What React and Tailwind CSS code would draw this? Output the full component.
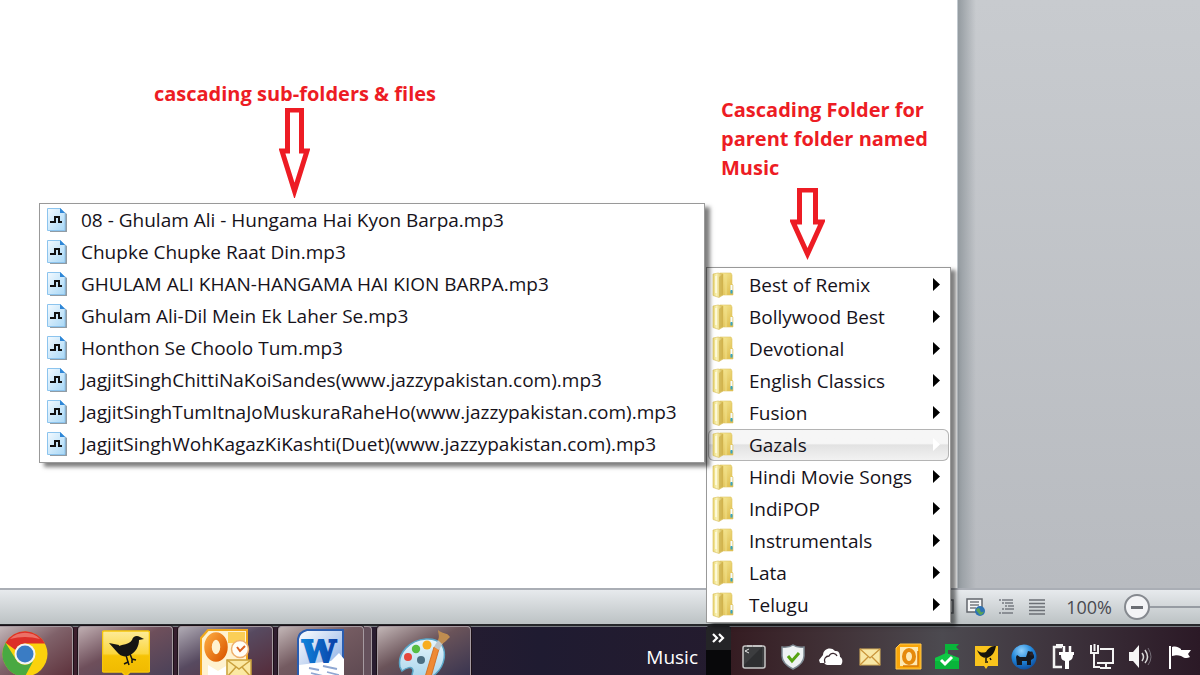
import React from "react";

const files = [
  "08 - Ghulam Ali - Hungama Hai Kyon Barpa.mp3",
  "Chupke Chupke Raat Din.mp3",
  "GHULAM ALI KHAN-HANGAMA HAI KION BARPA.mp3",
  "Ghulam Ali-Dil Mein Ek Laher Se.mp3",
  "Honthon Se Choolo Tum.mp3",
  "JagjitSinghChittiNaKoiSandes(www.jazzypakistan.com).mp3",
  "JagjitSinghTumItnaJoMuskuraRaheHo(www.jazzypakistan.com).mp3",
  "JagjitSinghWohKagazKiKashti(Duet)(www.jazzypakistan.com).mp3",
];

const folders = [
  "Best of Remix",
  "Bollywood Best",
  "Devotional",
  "English Classics",
  "Fusion",
  "Gazals",
  "Hindi Movie Songs",
  "IndiPOP",
  "Instrumentals",
  "Lata",
  "Telugu",
];

function Defs() {
  return (
    <svg width="0" height="0" className="absolute" aria-hidden="true">
      <defs>
        <linearGradient id="fileFill" x1="0" y1="0" x2="1" y2="1">
          <stop offset="0" stopColor="#f3faff" />
          <stop offset="1" stopColor="#a9d8f6" />
        </linearGradient>
        <linearGradient id="folderFront" x1="0" y1="0" x2="1" y2="0">
          <stop offset="0" stopColor="#e8d570" />
          <stop offset="0.35" stopColor="#faf3b8" />
          <stop offset="1" stopColor="#d3b54c" />
        </linearGradient>
        <linearGradient id="folderBack" x1="0" y1="0" x2="1" y2="1">
          <stop offset="0" stopColor="#f8ec9c" />
          <stop offset="1" stopColor="#dcb845" />
        </linearGradient>
        <linearGradient id="yellow" x1="0" y1="0" x2="0" y2="1">
          <stop offset="0" stopColor="#fdeb9a" />
          <stop offset="0.5" stopColor="#fbd63e" />
          <stop offset="0.55" stopColor="#f6c305" />
          <stop offset="1" stopColor="#efb800" />
        </linearGradient>
        <linearGradient id="orange" x1="0" y1="0" x2="1" y2="1">
          <stop offset="0" stopColor="#f9a23a" />
          <stop offset="1" stopColor="#dd5d04" />
        </linearGradient>
        <linearGradient id="wordBlue" x1="0" y1="0" x2="1" y2="1">
          <stop offset="0" stopColor="#ffffff" />
          <stop offset="1" stopColor="#7fa6e2" />
        </linearGradient>
        <linearGradient id="wordLetter" x1="0" y1="0" x2="1" y2="0">
          <stop offset="0" stopColor="#0f86dc" />
          <stop offset="1" stopColor="#0b3ea6" />
        </linearGradient>
        <linearGradient id="palette" x1="0" y1="0" x2="0" y2="1">
          <stop offset="0" stopColor="#e6f5fc" />
          <stop offset="1" stopColor="#a5d3ea" />
        </linearGradient>
        <radialGradient id="globe" cx="0.4" cy="0.25" r="0.8">
          <stop offset="0" stopColor="#8fd0fb" />
          <stop offset="0.5" stopColor="#2389dc" />
          <stop offset="1" stopColor="#0a4a9c" />
        </radialGradient>
      </defs>
    </svg>
  );
}

function FileIcon() {
  return (
    <svg width="22" height="26" viewBox="0 0 22 26" className="shrink-0" aria-hidden="true">
      <path d="M3 4h13l4 3v18H3z" fill="#75838d" opacity="0.8" />
      <path d="M0.5 1.5h13l4.5 4.5v17.5h-17.5z" fill="url(#fileFill)" stroke="#8cc4ee" />
      <path d="M13 1l5 5h-5z" fill="#2f86d6" />
      <path d="M3 15h5v-5h4v5h3" fill="none" stroke="#111" strokeWidth="2" />
    </svg>
  );
}

function FolderIcon() {
  return (
    <svg width="22" height="26" viewBox="0 0 22 26" className="shrink-0" aria-hidden="true">
      <path d="M8 1h11l1 2v9l1 1v10H8z" fill="url(#folderBack)" stroke="#dfc765" strokeWidth="0.6" />
      <path d="M14 3v20" stroke="#f0df88" />
      <path d="M1 2l5-1 5 1v21l-4 2.5-6-2z" fill="url(#folderFront)" stroke="#d8bd57" strokeWidth="0.6" />
      <path d="M4 4v17" stroke="#fffce6" strokeWidth="1.5" />
      <path d="M7 5l4-3v20l-4 3z" fill="#cfb04a" opacity="0.7" />
      <path d="M19.5 13v6" stroke="#f4fbff" strokeWidth="2" />
      <path d="M19.5 18v3.5" stroke="#35a5c4" strokeWidth="2" />
    </svg>
  );
}

function Arrow({ width, height, shaft, shoulder }) {
  const l = (width - shaft) / 2 + 2;
  const r = (width + shaft) / 2 - 2;
  const d = `M${l} 2H${r}V${shoulder}H${width - 3}L${width / 2} ${height - 7}L3 ${shoulder}H${l}Z`;
  return (
    <svg width={width} height={height} viewBox={`0 0 ${width} ${height}`} aria-hidden="true">
      <path d={d} fill="none" stroke="#ed1c24" strokeWidth="5" strokeMiterlimit="5" />
    </svg>
  );
}

function TaskButton({ className, label, children }) {
  return (
    <button
      aria-label={label}
      className={
        "flex h-full shrink-0 items-start justify-center overflow-hidden rounded-t border border-b-0 border-[#a59aa0] bg-linear-to-br via-45% pt-0.5 shadow-[0_0_0_1px_#1c1018] " +
        className
      }
    >
      {children}
    </button>
  );
}

function Chrome() {
  return (
    <svg width="46" height="46" viewBox="-23 -25 46 46" aria-hidden="true">
      <circle r="22.5" fill="#fbd20c" />
      <path d="M-19.5 -11.3A22.5 22.5 0 0 1 20 -10.5H0A10.5 10.5 0 0 0 -9.5 -4z" fill="#dd2f28" />
      <path d="M-19.5 -11.3A22.5 22.5 0 0 0 0 22.5L8.5 6.5A10.5 10.5 0 0 1 -9 5.5z" fill="#49a942" />
      <path d="M-15 -15A21 21 0 0 1 15 -15Q0 -19 -15 -15z" fill="#f28d80" opacity="0.7" />
      <circle r="10.5" fill="#f2f4f5" />
      <circle r="8.5" fill="#3a7cc4" />
    </svg>
  );
}

function TweetDeck() {
  return (
    <svg width="48" height="46" viewBox="0 -1 48 46" aria-hidden="true">
      <path d="M2 1h44q1.5 0 1.5 1.5v38q0 1.5-1.5 1.5H28l-4 4-4-4H2q-1.5 0-1.5-1.5v-38Q.5 1 2 1z" fill="url(#yellow)" stroke="#f6c60a" strokeWidth="1.5" />
      <g fill="#161513">
        <path d="M7 13c4 3 9 4 13 2c5-1 8-2 10-5c1-4 5-5 8-3l4 2-5 1c0 6-3 12-9 15c-5 3-10 1-13-3z" />
        <path d="M7 13l10 2-1 5z" />
        <path d="M24 25l2 7-4 2m4-2l1 3M28 24l2 5 4 1m-4-1v4" fill="none" stroke="#161513" strokeWidth="1.5" />
      </g>
    </svg>
  );
}

function Outlook() {
  return (
    <svg width="52" height="48" viewBox="0 0 52 48" aria-hidden="true">
      <path d="M8 1h39v47H1V9z" fill="#fff2cf" stroke="#f0a71c" strokeWidth="2" />
      <path d="M28 3h17v11H28z" fill="#fbcf57" />
      <ellipse cx="16" cy="18" rx="8" ry="11" fill="none" stroke="url(#orange)" strokeWidth="7.5" />
      <circle cx="40" cy="20" r="8.5" fill="#fffdf6" stroke="#efb06e" strokeWidth="1.5" />
      <path d="M37 18l3 4 5-5" fill="none" stroke="#dd6022" strokeWidth="2" />
      <path d="M8 36l10 6 8-5v11H8z" fill="#fff" />
      <path d="M27 31h24v17H27z" fill="#fbe9a3" stroke="#caa13d" strokeWidth="1.5" />
      <path d="M27 31l12 9 12-9M27 48l9-10M51 48l-9-10" fill="none" stroke="#caa13d" strokeWidth="1.5" />
    </svg>
  );
}

function Word() {
  return (
    <svg width="48" height="48" viewBox="0 0 48 48" aria-hidden="true">
      <path d="M10 1h36v47H1V10Q2 3 10 1z" fill="url(#wordBlue)" stroke="#2a5db0" strokeWidth="2" />
      <path d="M2 36l32-4 8-8 5 6v18H2z" fill="#fff" />
      <path d="M12 39l10 2M26 37l14 3M14 44l12 3M30 43l12 3" stroke="#8fa7d2" strokeWidth="1.8" />
      <text x="22" y="33" textAnchor="middle" fill="url(#wordLetter)" stroke="url(#wordLetter)" strokeWidth="2" fontFamily="DejaVu Serif, serif" fontWeight="700" fontSize="30">W</text>
    </svg>
  );
}

function Paint() {
  return (
    <svg width="52" height="48" viewBox="0 -2 52 48" aria-hidden="true">
      <path d="M2 36C-1 22 12 9 28 8C42 7 48 16 46 28C44 40 34 48 22 50C14 50 13 46 15 40C15 34 8 37 4 40Z" fill="url(#palette)" stroke="#5aa6c8" strokeWidth="1.5" />
      <circle cx="23" cy="29" r="4" fill="#4b6f83" />
      <circle cx="10" cy="26" r="4" fill="#e5473c" />
      <circle cx="18" cy="18" r="4.2" fill="#57bd43" />
      <circle cx="29" cy="14" r="4.5" fill="#f7ad20" />
      <path d="M27 46L36 16l5 2-8 28z" fill="#ee8a35" stroke="#cf6515" strokeWidth="0.8" />
      <path d="M36 16l4-7 5 3-4 7z" fill="#bfc6ca" />
      <path d="M40 9c2-4 0-7 0-10c4 4 9 2 12 7c-3 3-5 5-8 7z" fill="#c08d50" />
    </svg>
  );
}

const tray = [
  ["Console", (
    <g>
      <rect x="3" y="3" width="22" height="22" rx="2" fill="#3c3d3f" stroke="#c5c5c5" strokeWidth="1.5" />
      <path d="M4 22L22 4v20H4z" fill="#252628" opacity="0.6" />
      <path d="M9 6l-4 2 4 2M7 3h5M13 3h9" stroke="#e4e4e4" fill="none" />
    </g>
  )],
  ["Security", (
    <g>
      <path d="M14 2c3 2 7 2.5 11 2v9c0 6-5 10-11 13C8 23 3 19 3 13V4c4 .5 8 0 11-2z" fill="#eef2f3" stroke="#7e8a93" strokeWidth="1.5" />
      <path d="M9 13l4 5 7-8" fill="none" stroke="#56a312" strokeWidth="3" />
    </g>
  )],
  ["Cloud storage", (
    <g>
      <path d="M7 20H3l-1-3 4-5c0-6 8-9 12-4c5-1 5 5 5 6c3 1 3 6 1 8H12c-4 0-6-2-5-6z" fill="#fff" />
      <path d="M8 20c-2-4 1-7 4-7c2-4 7-3 8 0" fill="none" stroke="#3b2930" strokeWidth="1.3" />
    </g>
  )],
  ["Mail", (
    <g>
      <rect x="4" y="6" width="20" height="16" fill="#f8e7a5" stroke="#d9b25b" />
      <path d="M4 6l10 9 10-9M4 22l8-8M24 22l-8-8" fill="none" stroke="#c9953b" strokeWidth="1.3" />
    </g>
  )],
  ["Outlook", (
    <g>
      <path d="M5 1h21v25H1V5z" fill="#f9a60a" stroke="#ffc84a" />
      <path d="M5 4h18v19H5z" fill="#fff4d0" opacity="0.85" />
      <ellipse cx="14" cy="13.5" rx="5" ry="6.5" fill="none" stroke="#e68a0b" strokeWidth="4" />
      <path d="M23 8v15H8" fill="none" stroke="#d97a05" strokeWidth="1.5" />
    </g>
  )],
  ["Home status", (
    <g>
      <path d="M12 12V1h14l-3 3 3 3H15v4l11 4v11H2V15z" fill="#09b53a" />
      <path d="M2 15l11-5 13 5v3H2z" fill="#0fc845" />
      <path d="M8 17l4 4 7-7" fill="none" stroke="#fff" strokeWidth="3" />
    </g>
  )],
  ["TweetDeck", (
    <g>
      <path d="M3 3h23v20H16l-2 3-2-3H3z" fill="#f9c41c" />
      <path d="M5 7c3 3 6 3 9 2c3-5 6-6 10-6c-1 5-3 10-9 12c-5 0-8-3-10-8z" fill="#17140c" />
      <path d="M14 15v3M18 15l1 2M13 19h3" stroke="#17140c" strokeWidth="1.5" />
    </g>
  )],
  ["Terrier", (
    <g>
      <circle cx="14" cy="14" r="12.5" fill="url(#globe)" />
      <path d="M6 14l1-2 3 2h6l2-6 4 1 2 4v2l-3 2v5h-4v-4h-5v4H7z" fill="#16191f" />
      <path d="M19 12l3-4 2 5z" fill="#2b2226" />
    </g>
  )],
  ["Power", (
    <g>
      <path d="M13 4H5v20h8" fill="none" stroke="#f3f3f3" strokeWidth="2.5" />
      <path d="M7 1h7v3H7z" fill="#f3f3f3" />
      <path d="M15 3v7M21 3v7" stroke="#fff" strokeWidth="2.5" />
      <path d="M10 9h15v3h-1c0 4-2 5-4 6v8h-4v-8c-3-1-4-2-4-6h-2z" fill="#fff" />
    </g>
  )],
  ["Network", (
    <g fill="none" stroke="#f3f3f3">
      <path d="M12 6h13v14H9" strokeWidth="2" />
      <path d="M18 20v4M12 25h11M6 11v13h6" strokeWidth="2" />
      <path d="M3 2v8h7V2M6.5 1v7" strokeWidth="2" />
    </g>
  )],
  ["Volume", (
    <g>
      <path d="M3 9h4l6-7v23l-6-7H3z" fill="#f5f5f5" />
      <path d="M16 10q3 4 0 8M19 7q5 7 0 13" fill="none" stroke="#d9d9d9" strokeWidth="1.5" />
      <path d="M22 5q6 9 0 17" fill="none" stroke="#77707a" strokeWidth="1" />
    </g>
  )],
  ["Action Center", (
    <g>
      <path d="M5 3v23" stroke="#fff" strokeWidth="2" />
      <path d="M7 4c4-1 6 0 9 2v1h10l-3 4 2 3c-4 2-6 1-9-1c-3-1-5-1-9 0z" fill="#fff" />
    </g>
  )],
];

export default function App() {
  return (
    <div className="relative flex h-screen flex-col overflow-hidden bg-white font-['Open_Sans','Noto_Sans',sans-serif] text-[19px] text-[#16121a]">
      <Defs />

      <main className="flex min-h-0 flex-1">
        <div className="flex-1 bg-white" />
        <div className="w-[243px] border-l border-[#c3cad0] bg-linear-to-b from-[#c8cbcf] to-[#b8bbc0]">
          <div className="h-full w-[18px] bg-linear-to-r from-[#949ba0] to-transparent" />
        </div>
      </main>

      <footer className="flex h-9 shrink-0 items-center justify-end border-t-2 border-[#aaaeb5] bg-linear-to-b from-[#e7eaed] to-[#bcc2c4]">
        <div className="flex items-center gap-3">
          <button aria-label="Full screen reading" className="block">
            <svg width="18" height="18" viewBox="0 0 18 18" aria-hidden="true">
              <path d="M4 2h13v13H4zM7 5h8M7 8h8M7 11h8" fill="none" stroke="#666a70" strokeWidth="1.5" />
            </svg>
          </button>
          <button aria-label="Web layout" className="block">
            <svg width="20" height="18" viewBox="0 0 20 18" aria-hidden="true">
              <path d="M1 1h15v13H1z" fill="#f5f6f7" stroke="#62666c" strokeWidth="1.5" />
              <path d="M4 4h9M4 7h9M4 10h6" stroke="#777b80" strokeWidth="1.3" />
              <circle cx="14" cy="13" r="5" fill="#2e72b4" />
              <path d="M10 12q3-4 4 0t4 1q-1 4-4 4z" fill="#5ba357" />
            </svg>
          </button>
          <button aria-label="Outline" className="block">
            <svg width="18" height="18" viewBox="0 0 18 18" aria-hidden="true">
              <path d="M1 2h2M4 2h11M4 5h2M7 5h8M7 8h2M10 8h6M4 11h2M7 11h9M1 15h2M4 15h11" stroke="#777b81" strokeWidth="1.5" />
            </svg>
          </button>
          <button aria-label="Draft" className="block">
            <svg width="18" height="18" viewBox="0 0 18 18" aria-hidden="true">
              <path d="M1 2h16M1 5.5h16M1 9h16M1 12.5h16M1 16h16" stroke="#6c7076" strokeWidth="1.5" />
            </svg>
          </button>
        </div>
        <button className="ml-5 text-[18px] text-[#4a4a50]">100%</button>
        <button aria-label="Zoom out" className="ml-3 flex size-[26px] items-center justify-center rounded-full border-2 border-[#85898f] bg-[#f3f4f6]">
          <span className="h-[3px] w-3 bg-[#6b6e74]" />
        </button>
        <div className="h-[2px] w-[50px] bg-[#979ca3]" />
      </footer>

      <nav
        aria-label="Taskbar"
        className="flex h-[51px] shrink-0 border-t-2 border-[#25272a] bg-linear-to-r from-[#41202d] via-[#1f1b31] via-45% to-[#301b26] shadow-[inset_0_1px_0_#777a80]"
      >
        <div className="flex min-w-0 flex-1 gap-[5px]">
          <TaskButton label="Google Chrome" className="w-[73px] rounded-l-none border-l-0 from-[#c3b7b9] via-[#80626a] to-[#5e333d] pr-[22px]"><Chrome /></TaskButton>
          <TaskButton label="TweetDeck" className="w-[95px] from-[#bfaeb1] via-[#6e4f5b] to-[#4b4158]"><TweetDeck /></TaskButton>
          <TaskButton label="Microsoft Outlook" className="w-[95px] from-[#b0abb4] via-[#574a60] to-[#552c3b]"><Outlook /></TaskButton>
          <div className="flex">
            <TaskButton label="Microsoft Word" className="w-[86px] from-[#c2b6b6] via-[#745b61] to-[#5f4a52]"><Word /></TaskButton>
            <span className="w-2 rounded-tr border-t border-r border-[#a59aa0] bg-[#65515c]" />
          </div>
          <TaskButton label="Paint" className="w-[94px] from-[#c2b6b6] via-[#6a5359] to-[#3a3550]"><Paint /></TaskButton>
        </div>
        <div className="flex shrink-0">
          <button className="px-2 pt-4 pb-1 leading-6 text-white">Music</button>
          <button aria-label="Show Music folders" className="flex w-[25px] flex-col rounded-t bg-[#08080a]">
            <span className="flex h-6 w-full items-center justify-center rounded-t bg-[#242427]">
              <svg width="14" height="10" viewBox="0 0 14 10" aria-hidden="true">
                <path d="M1 1l4 4-4 4M7 1l4 4-4 4" fill="none" stroke="#fff" strokeWidth="2.2" />
              </svg>
            </span>
          </button>
        </div>
        <div className="mt-px grid w-[469px] shrink-0 grid-cols-12 items-center bg-linear-to-r from-[#351c22] via-[#4c4a50] via-45% to-[#2b1926] pr-[2px] pl-1 pt-3">
          {tray.map(([name, icon]) => (
            <button key={name} aria-label={name} className="flex justify-center">
              <svg width="28" height="28" viewBox="0 0 28 28" aria-hidden="true">{icon}</svg>
            </button>
          ))}
        </div>
      </nav>

      <div className="absolute top-[79px] right-[764px] flex flex-col items-center font-['Open_Sans',sans-serif] text-[20px] leading-[29px] font-bold text-[#ed1c24]">
        <p className="whitespace-nowrap">cascading sub-folders &amp; files</p>
        <Arrow width={31} height={90} shaft={18} shoulder={43} />
      </div>
      <div className="absolute top-[95px] right-[263px] w-[216px] font-['Open_Sans',sans-serif] text-[20px] leading-[29px] font-bold text-[#ed1c24]">
        <p>Cascading Folder for<br />parent folder named<br />Music</p>
        <div className="flex pt-1.5 pl-[69px]">
          <Arrow width={35} height={73} shaft={20} shoulder={34} />
        </div>
      </div>

      <ul
        role="menu"
        aria-label="Music"
        className="absolute right-[249px] bottom-[52px] w-[245px] border border-[#999] bg-white p-px shadow-[5px_3px_4px_rgba(0,0,0,0.5)]"
      >
        {folders.map((name) => {
          const active = name === "Gazals";
          return (
            <li key={name} role="none">
              <button
                role="menuitem"
                aria-haspopup="true"
                className={
                  "flex h-8 w-full items-center pr-2 pl-1 text-left " +
                  (active
                    ? "rounded-md bg-linear-to-b from-[#f6f6f6] from-45% via-[#e2e2e2] via-50% to-[#f3f3f3] shadow-[inset_0_0_0_1px_#b4b4b4]"
                    : "")
                }
              >
                <FolderIcon />
                <span className="flex-1 pl-[15px]">{name}</span>
                <svg width="8" height="14" viewBox="0 0 8 14" aria-hidden="true">
                  <path d="M0 0v13l7-6.5z" fill={active ? "#fff" : "#000"} />
                </svg>
              </button>
            </li>
          );
        })}
      </ul>

      <ul
        role="menu"
        aria-label="Gazals"
        className="absolute top-[203px] right-[495px] w-[666px] border border-[#999] bg-white px-px pb-0.5 shadow-[5px_4px_4px_rgba(0,0,0,0.5)]"
      >
        {files.map((name) => (
          <li key={name} role="none">
            <button role="menuitem" className="flex h-8 w-full items-center pl-1.5 text-left whitespace-nowrap">
              <FileIcon />
              <span className="pl-3">{name}</span>
            </button>
          </li>
        ))}
      </ul>
    </div>
  );
}
